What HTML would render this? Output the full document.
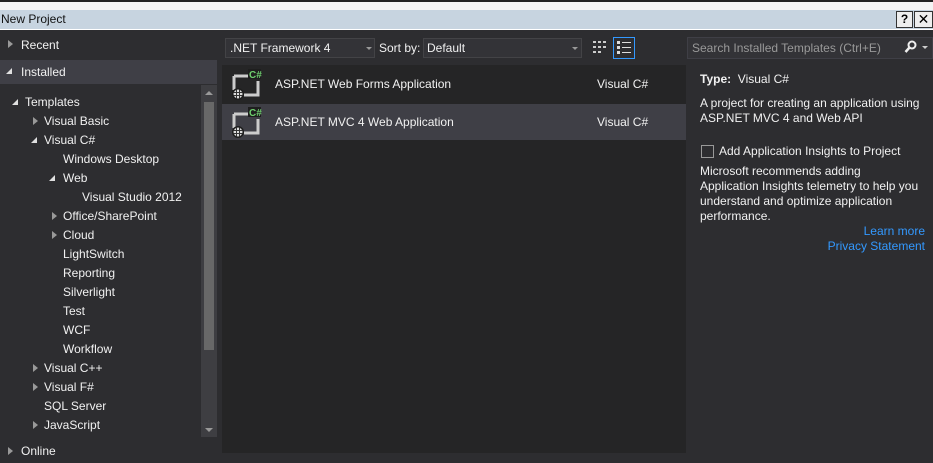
<!DOCTYPE html>
<html><head><meta charset="utf-8"><style>
*{margin:0;padding:0;box-sizing:border-box}
body{width:933px;height:463px;overflow:hidden;background:#2d2d30;font-family:"Liberation Sans","DejaVu Sans",sans-serif;font-size:12px;color:#f1f1f1;position:relative}
.a{position:absolute;white-space:nowrap}
.tri{position:absolute;width:0;height:0;border-top:4px solid transparent;border-bottom:4px solid transparent;border-left:5px solid #999}
.down{position:absolute;width:0;height:0;border-left:6px solid transparent;border-bottom:6px solid #e0e0e0}
.link{color:#3399ff}
</style></head><body>
<div class="a" style="left:0;top:0;width:933px;height:2px;background:#222"></div>
<div class="a" style="left:0;top:2px;width:933px;height:8px;background:#f4f4f4"></div>
<div class="a" style="left:0;top:10px;width:933px;height:20px;background:#c7d4e0;border-bottom:1px solid #fff"></div>
<div class="a" style="left:1px;top:12px;color:#111;font-size:12px">New Project</div>
<div class="a" style="left:896px;top:11px;width:17px;height:17px;background:#eee;border:1px solid #333;color:#000;font-weight:bold;text-align:center;line-height:15px">?</div>
<div class="a" style="left:914px;top:11px;width:19px;height:17px;background:#eee;border:1px solid #333;color:#000;font-weight:bold;text-align:center;line-height:15px;font-size:14px">✕</div>

<div class="tri" style="left:8px;top:40px"></div>
<div class="a" style="left:21px;top:38px">Recent</div>
<div class="a" style="left:0;top:60px;width:217px;height:24px;background:#3f3f46"></div>
<div class="down" style="left:6px;top:68px"></div>
<div class="a" style="left:21px;top:65px">Installed</div>
<div class="a" style="left:201px;top:85px;width:16px;height:352px;background:#3e3e42"></div>
<div class="a" style="left:204px;top:102px;width:10px;height:248px;background:#686868"></div>
<div class="a" style="left:205px;top:91px;width:0;height:0;border-left:4px solid transparent;border-right:4px solid transparent;border-bottom:4px solid #999"></div>
<div class="a" style="left:205px;top:428px;width:0;height:0;border-left:4px solid transparent;border-right:4px solid transparent;border-top:4px solid #999"></div>
<div class="down" style="left:12px;top:99px"></div>
<div class="a" style="left:25px;top:95px">Templates</div>
<div class="tri" style="left:33px;top:117px"></div><div class="a" style="left:44px;top:114px">Visual Basic</div>
<div class="down" style="left:31px;top:137px"></div><div class="a" style="left:44px;top:133px">Visual C#</div>
<div class="a" style="left:63px;top:152px">Windows Desktop</div>
<div class="down" style="left:49px;top:175px"></div><div class="a" style="left:63px;top:171px">Web</div>
<div class="a" style="left:82px;top:190px">Visual Studio 2012</div>
<div class="tri" style="left:52px;top:212px"></div><div class="a" style="left:63px;top:209px">Office/SharePoint</div>
<div class="tri" style="left:52px;top:231px"></div><div class="a" style="left:63px;top:228px">Cloud</div>
<div class="a" style="left:63px;top:247px">LightSwitch</div>
<div class="a" style="left:63px;top:266px">Reporting</div>
<div class="a" style="left:63px;top:285px">Silverlight</div>
<div class="a" style="left:63px;top:304px">Test</div>
<div class="a" style="left:63px;top:323px">WCF</div>
<div class="a" style="left:63px;top:342px">Workflow</div>
<div class="tri" style="left:33px;top:364px"></div><div class="a" style="left:44px;top:361px">Visual C++</div>
<div class="tri" style="left:33px;top:383px"></div><div class="a" style="left:44px;top:380px">Visual F#</div>
<div class="a" style="left:44px;top:399px">SQL Server</div>
<div class="tri" style="left:33px;top:421px"></div><div class="a" style="left:44px;top:418px">JavaScript</div>
<div class="tri" style="left:8px;top:447px"></div><div class="a" style="left:21px;top:444px">Online</div>

<div class="a" style="left:225px;top:38px;width:150px;height:20px;background:#333337;border:1px solid #434346"></div>
<div class="a" style="left:230px;top:41px">.NET Framework 4</div>
<div class="a" style="left:366px;top:47px;border-left:3px solid transparent;border-right:3px solid transparent;border-top:3px solid #999"></div>
<div class="a" style="left:379px;top:41px">Sort by:</div>
<div class="a" style="left:423px;top:38px;width:159px;height:20px;background:#333337;border:1px solid #434346"></div>
<div class="a" style="left:427px;top:41px">Default</div>
<div class="a" style="left:572px;top:47px;border-left:3px solid transparent;border-right:3px solid transparent;border-top:3px solid #999"></div>
<svg class="a" style="left:592px;top:40px" width="16" height="16"><g fill="#ccc"><rect x="1" y="1" width="3" height="2"/><rect x="6" y="1" width="3" height="2"/><rect x="11" y="1" width="3" height="2"/><rect x="1" y="6" width="3" height="2"/><rect x="6" y="6" width="3" height="2"/><rect x="11" y="6" width="3" height="2"/><rect x="1" y="11" width="3" height="2"/><rect x="6" y="11" width="3" height="2"/></g></svg>
<div class="a" style="left:613px;top:37px;width:22px;height:22px;border:1px solid #3399ff"></div>
<svg class="a" style="left:616px;top:40px" width="16" height="16"><g fill="#ddd"><rect x="1" y="1" width="3" height="3"/><rect x="6" y="2" width="9" height="1"/><rect x="1" y="6" width="3" height="3"/><rect x="6" y="7" width="9" height="1"/><rect x="1" y="11" width="3" height="3"/><rect x="6" y="12" width="9" height="1"/></g></svg>

<div class="a" style="left:222px;top:65px;width:464px;height:388px;background:#252526"></div>
<div class="a" style="left:222px;top:104px;width:464px;height:36px;background:#3f3f46"></div>
<svg class="a" style="left:230px;top:69px" width="34" height="32"><path d="M4 7h18M4 7v14M28 12v14h-14" stroke="#ccc" stroke-width="3" fill="none"/><circle cx="8" cy="25" r="6" fill="#1e1e1e"/><circle cx="8" cy="25" r="4.5" fill="#ddd"/><path d="M3.5 23.5h9M3.5 26.5h9M6.5 20.5v9M9.5 20.5v9" stroke="#333" stroke-width="1"/><rect x="18" y="0" width="13" height="10" fill="#1e1e1e"/><text x="19" y="9" fill="#6fd06f" font-size="10" font-weight="bold" font-family="Liberation Sans">C#</text></svg>
<svg class="a" style="left:230px;top:107px" width="34" height="32"><path d="M4 7h18M4 7v14M28 12v14h-14" stroke="#ccc" stroke-width="3" fill="none"/><circle cx="8" cy="25" r="6" fill="#1e1e1e"/><circle cx="8" cy="25" r="4.5" fill="#ddd"/><path d="M3.5 23.5h9M3.5 26.5h9M6.5 20.5v9M9.5 20.5v9" stroke="#333" stroke-width="1"/><rect x="18" y="0" width="13" height="10" fill="#1e1e1e"/><text x="19" y="9" fill="#6fd06f" font-size="10" font-weight="bold" font-family="Liberation Sans">C#</text></svg>
<div class="a" style="left:275px;top:77px">ASP.NET Web Forms Application</div>
<div class="a" style="left:597px;top:77px">Visual C#</div>
<div class="a" style="left:275px;top:115px">ASP.NET MVC 4 Web Application</div>
<div class="a" style="left:597px;top:115px">Visual C#</div>

<div class="a" style="left:687px;top:37px;width:246px;height:22px;background:#333337;border:1px solid #3f3f46"></div>
<div class="a" style="left:692px;top:41px;color:#999">Search Installed Templates (Ctrl+E)</div>
<svg class="a" style="left:904px;top:40px" width="14" height="14"><circle cx="8" cy="5" r="3.5" stroke="#eee" stroke-width="2" fill="none"/><path d="M5.5 7.5L1.5 12" stroke="#eee" stroke-width="2.5"/></svg>
<div class="a" style="left:922px;top:46px;border-left:3px solid transparent;border-right:3px solid transparent;border-top:3px solid #ccc"></div>
<div class="a" style="left:700px;top:72px"><b>Type:</b>&nbsp; Visual C#</div>
<div class="a" style="left:700px;top:96px;line-height:15px">A project for creating an application using<br>ASP.NET MVC 4 and Web API</div>
<div class="a" style="left:701px;top:145px;width:13px;height:13px;border:1px solid #999"></div>
<div class="a" style="left:719px;top:144px">Add Application Insights to Project</div>
<div class="a" style="left:700px;top:164px;line-height:15px">Microsoft recommends adding<br>Application Insights telemetry to help you<br>understand and optimize application<br>performance.</div>
<div class="a link" style="right:8px;top:224px">Learn more</div>
<div class="a link" style="right:8px;top:239px">Privacy Statement</div>
</body></html>
